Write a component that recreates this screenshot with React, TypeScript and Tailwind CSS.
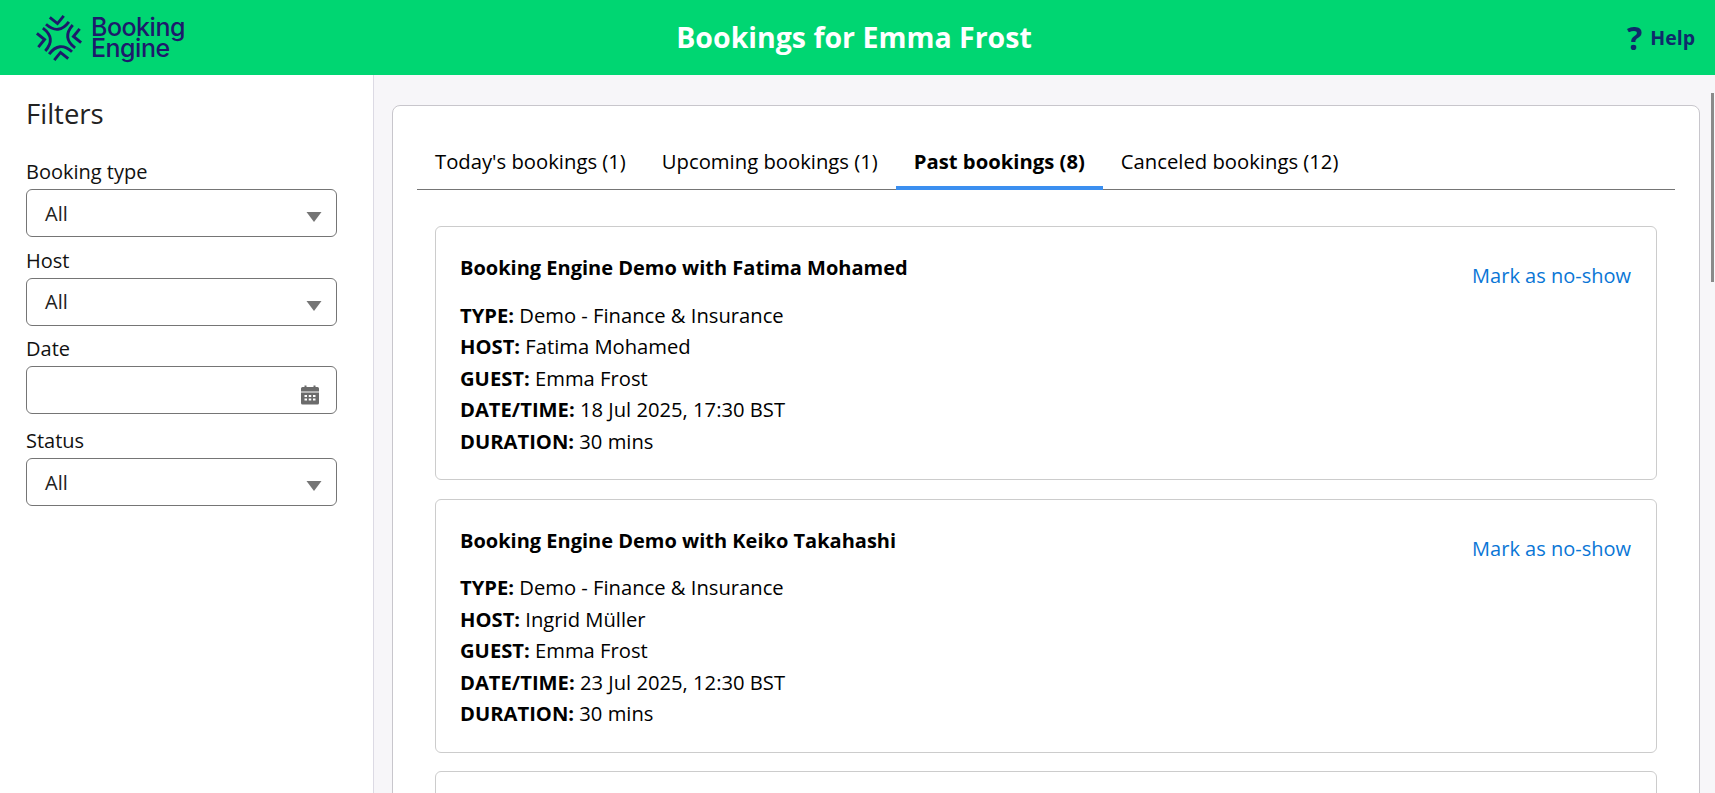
import React from "react";

const FONT = "font-['Open_Sans','Noto_Sans',sans-serif]";

function Logo() {
  const arm = (
    <g fill="none" stroke="#1d1a6b" strokeWidth="2.9">
      <path d="M-7 -21.5 L0 -14.5 L7 -21.5" />
      <path d="M-11.5 -15 Q0 -2.5 11.5 -15" />
    </g>
  );
  return (
    <svg width="50" height="50" viewBox="-25 -25 50 50" className="shrink-0">
      <g transform="rotate(-6)">
        {arm}
        <g transform="rotate(90)">{arm}</g>
        <g transform="rotate(180)">{arm}</g>
        <g transform="rotate(270)">{arm}</g>
      </g>
    </svg>
  );
}

function Chevron() {
  return (
    <svg width="16" height="10" viewBox="0 0 16 10" className="mt-[8px] shrink-0">
      <path d="M0.5 0 H15.5 L8 10 Z" fill="#757575" />
    </svg>
  );
}

function Select({ label }: { label: string }) {
  return (
    <div className="flex flex-col">
      <label className="pb-[2px] text-[20px] leading-[30px] text-[#111]">{label}</label>
      <div className="flex h-[48px] w-[311px] items-center justify-between rounded-[6px] border border-[#757575] bg-white pl-[18px] pr-[14px] text-[20px] text-[#222]">
        <span className="mt-[1px]">All</span>
        <Chevron />
      </div>
    </div>
  );
}

function DateField() {
  return (
    <div className="flex flex-col">
      <label className="pb-[2px] text-[20px] leading-[30px] text-[#111]">Date</label>
      <div className="flex h-[48px] w-[311px] items-center justify-end rounded-[6px] border border-[#757575] bg-white pr-[17px]">
        <svg width="18" height="20" viewBox="0 0 18 20" className="mt-[10px]">
          <path d="M0 3.5 a1.5 1.5 0 0 1 1.5 -1.5 H3.5 V0.5 h2 V2 h7 V0.5 h2 V2 h2 a1.5 1.5 0 0 1 1.5 1.5 V6.5 H0 Z" fill="#6b6b6b" />
          <path fillRule="evenodd" d="M0 7.5 H18 V18 a1.5 1.5 0 0 1 -1.5 1.5 H1.5 A1.5 1.5 0 0 1 0 18 Z M3.5 10 v2 h2.5 v-2 Z M7.75 10 v2 h2.5 v-2 Z M12 10 v2 h2.5 v-2 Z M3.5 13.5 v2 h2.5 v-2 Z M7.75 13.5 v2 h2.5 v-2 Z M12 13.5 v2 h2.5 v-2 Z" fill="#6b6b6b" />
        </svg>
      </div>
    </div>
  );
}

function Row({ k, v }: { k: string; v: string }) {
  return (
    <div className="text-[20.2px] leading-[31.5px] text-black">
      <b className="font-bold">{k}:</b> {v}
    </div>
  );
}

function Card({ title, host, date }: { title: string; host: string; date: string }) {
  return (
    <div className="flex h-[254px] shrink-0 items-start justify-between rounded-[6px] border border-[#cccccc] bg-white pl-[24px] pr-[25px] pt-[26px]">
      <div>
        <div className="mb-[16.5px] text-[20px] font-bold leading-[30px] text-black">{title}</div>
        <Row k="TYPE" v="Demo - Finance & Insurance" />
        <Row k="HOST" v={host} />
        <Row k="GUEST" v="Emma Frost" />
        <Row k="DATE/TIME" v={date} />
        <Row k="DURATION" v="30 mins" />
      </div>
      <a className="mt-[8px] text-[20px] leading-[30px] text-[#0a76d6]">Mark as no-show</a>
    </div>
  );
}

function Tab({ label, active }: { label: string; active?: boolean }) {
  return (
    <div
      className={
        active
          ? "-mb-px border-b-[4px] border-[#3b8ff0] px-[18px] pt-[13px] text-[20.25px] font-bold leading-[26px] text-black"
          : "px-[18px] pt-[13px] text-[20.25px] leading-[26px] text-black"
      }
    >
      {label}
    </div>
  );
}

export default function App() {
  return (
    <div className={`flex h-screen flex-col overflow-hidden bg-white ${FONT}`}>
      <header className="relative flex h-[75px] shrink-0 items-center justify-between bg-[#00d672] pl-[34px] pr-[20px]">
        <div className="flex items-center gap-[7px]">
          <Logo />
          <div className="font-['Inter',sans-serif] text-[25px] font-medium leading-[21px] tracking-[-0.5px] text-[#1d1a6b]">
            <div>Booking</div>
            <div>Engine</div>
          </div>
        </div>
        <h1 className="absolute left-0 right-0 pr-[7px] text-center text-[28.5px] font-bold text-white">Bookings for Emma Frost</h1>
        <div className="flex items-center gap-[8px] text-[#0f2a6b]">
          <span className="text-[32px] font-bold leading-none">?</span>
          <span className="text-[19.5px] font-bold">Help</span>
        </div>
      </header>
      <div className="flex min-h-0 flex-1">
        <aside className="w-[374px] shrink-0 border-r border-[#dcdae4] bg-white pl-[26px] pt-[19px]">
          <h2 className="mb-[23px] text-[27.5px] font-normal leading-[40px] text-[#222]">Filters</h2>
          <div className="flex flex-col">
            <div className="mb-[8.5px]"><Select label="Booking type" /></div>
            <div className="mb-[8.5px]"><Select label="Host" /></div>
            <div className="mb-[12px]"><DateField /></div>
            <Select label="Status" />
          </div>
        </aside>
        <main className="relative min-w-0 flex-1 overflow-hidden bg-[#f7f6f9] pl-[18px] pr-[15px] pt-[30px]">
          <div className="rounded-[8px] border border-[#c8c6cc] bg-white px-[24px] pt-[29px]">
            <div className="flex h-[55px] border-b border-[#757575]">
              <Tab label="Today's bookings (1)" />
              <Tab label="Upcoming bookings (1)" />
              <Tab label="Past bookings (8)" active />
              <Tab label="Canceled bookings (12)" />
            </div>
            <div className="flex flex-col gap-[18.5px] px-[18px] pt-[36px]">
              <Card title="Booking Engine Demo with Fatima Mohamed" host="Fatima Mohamed" date="18 Jul 2025, 17:30 BST" />
              <Card title="Booking Engine Demo with Keiko Takahashi" host="Ingrid Müller" date="23 Jul 2025, 12:30 BST" />
              <Card title="Booking Engine Demo" host="Ingrid Müller" date="23 Jul 2025, 12:30 BST" />
            </div>
          </div>
          <div className="absolute right-[1px] top-[18px] h-[189px] w-[3px] bg-[#8a8a8a]" />
        </main>
      </div>
    </div>
  );
}
